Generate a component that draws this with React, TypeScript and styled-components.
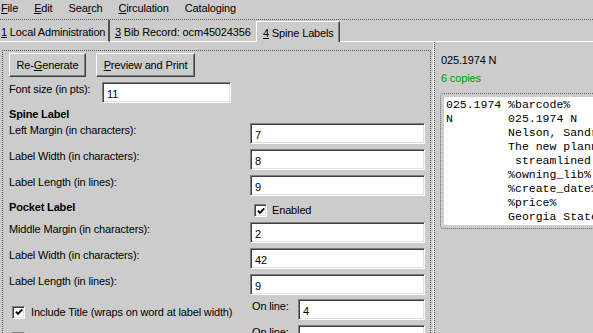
import { FC, ReactNode } from 'react'
import styled, { createGlobalStyle, css } from 'styled-components'

const GlobalStyle = createGlobalStyle`
  html, body {
    margin: 0;
    padding: 0;
    background: #cccccc;
    overflow: hidden;
  }
  body {
    font-family: "Liberation Sans", Arial, sans-serif;
    font-size: 11px;
    letter-spacing: -0.15px;
    color: #000;
  }
`

const previewLines = [
  '025.1974 %barcode%',
  'N        025.1974 N',
  '         Nelson, Sandra S.',
  '         The new planning for results :',
  '          streamlined',
  '         %owning_lib%',
  '         %create_date%',
  '         %price%',
  '         Georgia State Library',
]

const CheckMark: FC = () => (
  <svg width="8" height="8" viewBox="0 0 8 8">
    <path d="M0.8 3.6 L3 5.8 L7.2 1.4" stroke="#000" strokeWidth="1.9" fill="none" />
  </svg>
)

const CheckBox: FC<{ checked?: boolean }> = ({ checked }) => (
  <Check>{checked && <CheckMark />}</Check>
)

const Field: FC<{ label: ReactNode; value: string; top: number }> = ({ label, value, top }) => (
  <FieldRow $top={top}>
    <Label>{label}</Label>
    <TextBox $width={175} defaultValue={value} readOnly />
  </FieldRow>
)

const IncludeRow: FC<{ label: string; checked?: boolean; value: string; top: number }> = ({
  label,
  checked,
  value,
  top,
}) => (
  <FieldRow $top={top}>
    <CheckLabel>
      <CheckBox checked={checked} />
      <span>{label}</span>
    </CheckLabel>
    <OnLineGroup>
      <OnLineLabel>On line:</OnLineLabel>
      <TextBox $width={127} defaultValue={value} readOnly />
    </OnLineGroup>
  </FieldRow>
)

export default function App() {
  return (
    <Window>
      <GlobalStyle />
      <MenuBar>
        <span><Key>F</Key>ile</span>
        <span><Key>E</Key>dit</span>
        <span>Sea<Key>r</Key>ch</span>
        <span><Key>C</Key>irculation</span>
        <span>Catalo<Key>g</Key>ing</span>
      </MenuBar>

      <TabStrip>
        <Tab $width={110} $pad={1} $divider>
          <Key>1</Key> Local Administration
        </Tab>
        <Tab $width={146} $pad={5}>
          <Key>3</Key> Bib Record: ocm45024356
        </Tab>
        <Tab $width={84} $pad={6} $selected>
          <Key>4</Key> Spine Labels
        </Tab>
        <TabFiller />
      </TabStrip>

      <Body>
        <LeftPane>
          <ButtonRow>
            <Button $width={77}>Re-<Key>G</Key>enerate</Button>
            <Button $width={99}><Key>P</Key>review and Print</Button>
          </ButtonRow>

          <FontRow>
            <FontLabel>Font size (in pts):</FontLabel>
            <TextBox $width={129} defaultValue="11" readOnly />
          </FontRow>

          <Heading $top={4}>Spine Label</Heading>
          <Field top={2} label="Left Margin (in characters):" value="7" />
          <Field top={5} label="Label Width (in characters):" value="8" />
          <Field top={5} label="Label Length (in lines):" value="9" />

          <PocketRow>
            <Heading $top={0}>Pocket Label</Heading>
            <EnabledBox>
              <CheckBox checked />
              <span>Enabled</span>
            </EnabledBox>
          </PocketRow>
          <Field top={5} label="Middle Margin (in characters):" value="2" />
          <Field top={5} label="Label Width (in characters):" value="42" />
          <Field top={5} label="Label Length (in lines):" value="9" />

          <IncludeRow top={4} checked label="Include Title (wraps on word at label width)" value="4" />
          <IncludeRow top={5} label="Include Author" value="" />
        </LeftPane>

        <Splitter />

        <RightPane>
          <CallNumber>025.1974 N</CallNumber>
          <Copies>6 copies</Copies>
          <PreviewFrame>
            <PreviewSheet>{previewLines.join('\n')}</PreviewSheet>
          </PreviewFrame>
        </RightPane>
      </Body>
    </Window>
  )
}

const Window = styled.div`
  width: 593px;
  height: 333px;
  overflow: hidden;
  display: flex;
  flex-direction: column;
  background: #cccccc;
`

const MenuBar = styled.div`
  display: flex;
  gap: 16px;
  height: 19px;
  box-sizing: border-box;
  padding: 1px 0 0 1px;
  line-height: 14px;
  white-space: nowrap;
`

const Key = styled.span`
  text-decoration: underline;
`

const TabStrip = styled.div`
  display: flex;
  flex: none;
  height: 23px;
  box-sizing: border-box;
  border-top: 1px dotted #555;
`

const Tab = styled.div<{ $width: number; $pad: number; $selected?: boolean; $divider?: boolean }>`
  flex: none;
  width: ${(p) => p.$width}px;
  box-sizing: border-box;
  line-height: 14px;
  white-space: nowrap;
  overflow: hidden;
  ${(p) =>
    p.$selected
      ? css`
          margin-top: 1px;
          padding: 4px 0 0 ${p.$pad}px;
          border-top: 1px solid #fff;
          border-left: 1px solid #fff;
          border-right: 1px solid #404040;
          box-shadow: inset -1px 0 #808080;
        `
      : css`
          padding: 5px 0 0 ${p.$pad}px;
          border-bottom: 1px solid #fff;
        `}
  ${(p) =>
    p.$divider &&
    css`
      border-right: 2px solid #505050;
    `}
`

const TabFiller = styled.div`
  flex: 1;
  border-bottom: 1px solid #fff;
`

const Body = styled.div`
  display: flex;
  flex: 1;
  min-height: 0;
`

const LeftPane = styled.div`
  flex: none;
  width: 429px;
  margin: 8px 0 0 2px;
  padding: 2px 5px 0 6px;
  box-sizing: border-box;
  border: 1px dotted #555;
  border-bottom: none;
  display: flex;
  flex-direction: column;
`

const Splitter = styled.div`
  flex: none;
  width: 3px;
  box-sizing: border-box;
  border-right: 1px solid #fff;
`

const RightPane = styled.div`
  flex: 1;
  min-width: 0;
  padding: 11px 0 0 5px;
  border-left: 1px dotted #555;
  line-height: 14px;
`

const ButtonRow = styled.div`
  display: flex;
  gap: 10px;
`

const Button = styled.button<{ $width: number }>`
  width: ${(p) => p.$width}px;
  height: 24px;
  padding: 0;
  margin: 0;
  font: inherit;
  letter-spacing: inherit;
  color: #000;
  background: #cccccc;
  border: 1px solid;
  border-color: #fff #404040 #404040 #fff;
  box-shadow: inset -1px -1px #808080;
  white-space: nowrap;
`

const FontRow = styled.div`
  display: flex;
  align-items: flex-start;
  margin-top: 5px;
`

const Label = styled.span`
  line-height: 14px;
  white-space: nowrap;
`

const FontLabel = styled(Label)`
  width: 93px;
  flex: none;
`

const TextBox = styled.input<{ $width: number }>`
  flex: none;
  width: ${(p) => p.$width}px;
  height: 21px;
  box-sizing: border-box;
  margin: 0;
  padding: 2px 4px 0;
  font: inherit;
  letter-spacing: inherit;
  color: #000;
  background: #fff;
  border: 1px solid;
  border-color: #808080 #fff #fff #808080;
  box-shadow: inset 1px 1px #404040, inset -1px -1px #dfdfdf;
  outline: none;
`

const Heading = styled.div<{ $top: number }>`
  margin-top: ${(p) => p.$top}px;
  font-weight: bold;
  line-height: 14px;
  height: 14px;
`

const FieldRow = styled.div<{ $top: number }>`
  display: flex;
  justify-content: space-between;
  align-items: flex-start;
  height: 21px;
  margin-top: ${(p) => p.$top}px;
`

const PocketRow = styled.div`
  display: flex;
  justify-content: space-between;
  align-items: flex-start;
  height: 18px;
  margin-top: 4px;
`

const EnabledBox = styled.div`
  width: 175px;
  box-sizing: border-box;
  padding-left: 4px;
  display: flex;
  align-items: flex-start;
  gap: 5px;
  line-height: 14px;

  & > span:first-child {
    margin-top: 4px;
  }
  & > span:last-child {
    margin-top: 3px;
  }
`

const Check = styled.span`
  flex: none;
  width: 13px;
  height: 13px;
  box-sizing: border-box;
  background: #fff;
  border: 1px solid;
  border-color: #808080 #fff #fff #808080;
  box-shadow: inset 1px 1px #404040, inset -1px -1px #dfdfdf;
  display: flex;
  align-items: center;
  justify-content: center;
`

const CheckLabel = styled.div`
  display: flex;
  align-items: center;
  gap: 6px;
  margin: 6px 0 0 3px;
  line-height: 14px;
  white-space: nowrap;
`

const OnLineGroup = styled.div`
  width: 175px;
  display: flex;
  justify-content: space-between;
  align-items: flex-start;
`

const OnLineLabel = styled(Label)`
  padding-left: 2px;
`

const CallNumber = styled.div`
  margin-left: 1px;
`

const Copies = styled.div`
  margin: 4px 0 0 1px;
  color: #009900;
`

const PreviewFrame = styled.div`
  margin-top: 8px;
  width: 260px;
  box-sizing: border-box;
  padding: 3px;
  border: 1px dotted #666;
  border-radius: 4px;
`

const PreviewSheet = styled.pre`
  margin: 0;
  padding: 1px 0 1px 2px;
  background: #fff;
  font-family: "Liberation Mono", "Courier New", monospace;
  font-size: 11.5px;
  letter-spacing: 0;
  line-height: 14px;
  white-space: pre;
  overflow: hidden;
`
